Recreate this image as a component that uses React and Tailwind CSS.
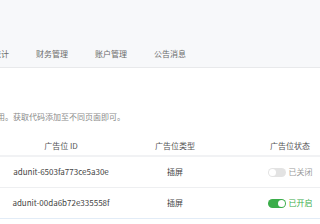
import { useState } from 'react'

const tabs = ['数据统计', '财务管理', '账户管理', '公告消息']

const units = [
  { id: 'adunit-6503fa773ce5a30e', type: '插屏', on: false },
  { id: 'adunit-00da6b72e335558f', type: '插屏', on: true },
]

function Toggle({ on, onClick }) {
  return (
    <button
      onClick={onClick}
      className={`relative w-[18px] h-[9px] rounded-full ${on ? 'bg-[#3aad4a]' : 'bg-[#e3e3e3]'}`}
    >
      <span
        className={`absolute top-[1px] w-[7px] h-[7px] rounded-full bg-white ${on ? 'right-[1px]' : 'left-[1px]'}`}
      />
    </button>
  )
}

export default function App() {
  const [rows, setRows] = useState(units)

  const flip = (id) => setRows(rows.map((r) => (r.id === id ? { ...r, on: !r.on } : r)))

  return (
    <div className="w-[320px] h-[224px] overflow-hidden bg-white font-['Noto_Sans_CJK_SC','Noto_Sans',sans-serif] text-[8px]">
      {/* top nav */}
      <div className="h-[68px] bg-[#f7f8fa] border-b border-[#e8e9eb] flex items-end pb-[8px]">
        <div className="flex gap-[27px] ml-[-23px] text-[#6b6b6b] whitespace-nowrap leading-[10px]">
          {tabs.map((t) => (
            <span key={t}>{t}</span>
          ))}
        </div>
      </div>

      {/* description */}
      <div className="pt-[44px] whitespace-nowrap text-[#8a8a8a] leading-[10px] ml-[-107px]">
        广告位创建后可在小程序中使用。获取代码添加至不同页面即可。
      </div>

      {/* table */}
      <div className="mt-[15px] w-[352px]">
        <div className="grid grid-cols-[122px_106px_124px] h-[20px] items-center text-center text-[#555] border-b-2 border-[#f1f2f4]">
          <span>广告位 ID</span>
          <span>广告位类型</span>
          <span>广告位状态</span>
        </div>
        {rows.map((r, i) => (
          <div
            key={r.id}
            className={`grid grid-cols-[122px_106px_124px] h-[31px] items-center text-center text-[#444] border-b ${
              i === rows.length - 1 ? 'border-[#e2ecf7]' : 'border-[#eeeff1]'
            }`}
          >
            <span>{r.id}</span>
            <span>{r.type}</span>
            <span className="flex items-center justify-center gap-[3px]">
              <Toggle on={r.on} onClick={() => flip(r.id)} />
              <span className={r.on ? 'text-[#3aad4a]' : 'text-[#9a9a9a]'}>{r.on ? '已开启' : '已关闭'}</span>
            </span>
          </div>
        ))}
      </div>
    </div>
  )
}
